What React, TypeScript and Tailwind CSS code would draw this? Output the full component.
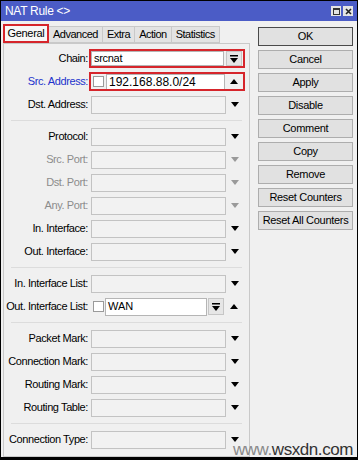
import React from "react";

// small dropdown triangles
const Down = ({ gray = false }: { gray?: boolean }) => (
  <svg width="8" height="5" viewBox="0 0 8 5">
    <path d="M0 0h8L4 5z" fill={gray ? "#9a9a9a" : "#000"} />
  </svg>
);

const Up = () => (
  <svg width="8" height="5" viewBox="0 0 8 5">
    <path d="M0 5h8L4 0z" fill="#000" />
  </svg>
);

const DownBar = () => (
  <svg width="8" height="8" viewBox="0 0 8 8">
    <rect x="0" y="0" width="8" height="1.5" fill="#000" />
    <path d="M0 3h8L4 8z" fill="#000" />
  </svg>
);

type RowProps = {
  label: string;
  tone?: "normal" | "blue" | "gray";
  children: React.ReactNode;
};

const Row = ({ label, tone = "normal", children }: RowProps) => {
  const color =
    tone === "blue" ? "text-[#2233cc]" : tone === "gray" ? "text-[#8c8c8c]" : "text-black";
  return (
    <div className="flex h-[23px] items-center">
      <div
        className={`flex w-[84px] justify-end whitespace-nowrap text-[11px] tracking-[-0.4px] ${color}`}
      >
        {label}
      </div>
      <div className="relative ml-[3px] flex h-full w-[152px] items-center">{children}</div>
    </div>
  );
};

const EmptyField = ({ gray = false }: { gray?: boolean }) => (
  <>
    <div className="h-[18px] w-[135px] border border-[#c3c3c3] bg-[#f2f2f2]" />
    <div className="flex w-[17px] justify-center">
      <Down gray={gray} />
    </div>
  </>
);

const Sep = () => (
  <div className="flex h-[9px] items-center px-[7px]">
    <div className="h-px w-full bg-[#dcdcdc]" />
  </div>
);

const RedBox = () => (
  <div className="pointer-events-none absolute -left-[2px] top-[2px] h-[19px] w-[156px] border-2 border-[#d6252b]" />
);

const tabs = ["General", "Advanced", "Extra", "Action", "Statistics"];
const buttons = [
  "OK",
  "Cancel",
  "Apply",
  "Disable",
  "Comment",
  "Copy",
  "Remove",
  "Reset Counters",
  "Reset All Counters",
];

export default function App() {
  return (
    <div
      className="relative flex h-[460px] w-[358px] flex-col border border-b-[3px] border-black bg-[#f0f0f0]"
      style={{ fontFamily: '"Liberation Sans", Arial, sans-serif' }}
    >
      {/* title bar */}
      <div className="flex h-[20px] items-center justify-between bg-[#4b5cc6] pl-[4px] pr-[4px]">
        <span className="text-[12px] tracking-[-0.3px] text-white">NAT Rule &lt;&gt;</span>
        <div className="flex gap-[2px]">
          <div className="flex h-[10px] w-[10px] items-center justify-center bg-[#e4e4e4]">
            <div className="h-[7px] w-[7px] border border-t-2 border-[#333]" />
          </div>
          <div className="flex h-[10px] w-[10px] items-center justify-center bg-[#e4e4e4]">
            <svg width="7" height="7" viewBox="0 0 7 7">
              <path d="M1 1l5 5M6 1L1 6" stroke="#222" strokeWidth="1.6" />
            </svg>
          </div>
        </div>
      </div>

      <div className="flex flex-1">
        {/* left side: tabs + panel */}
        <div className="flex w-[249px] flex-col pl-[2px] pt-[3px]">
          <div className="flex h-[19px] items-end">
            {tabs.map((t, i) => (
              <div
                key={t}
                className={
                  i === 0
                    ? "flex h-[19px] w-[46px] items-center justify-center border-2 border-[#d6252b] bg-[#f7f7f7] text-[11px] tracking-[-0.3px]"
                    : "flex h-[17px] items-center border border-l-0 border-[#c9c9c9] bg-[#e3e3e3] px-[4px] text-[11px] tracking-[-0.5px]"
                }
              >
                {t}
              </div>
            ))}
          </div>
          <div className="flex flex-1 flex-col border border-t border-[#c9c9c9] pt-[3px]">
            <Row label="Chain:">
              <div className="flex h-[15px] w-[133px] items-center border border-[#b5b5b5] bg-white px-[2px] text-[11px] tracking-[-0.3px]">
                srcnat
              </div>
              <div className="ml-[2px] flex h-[15px] w-[16px] items-center justify-center border border-[#c6c6c6] bg-[#e6e6e6]">
                <DownBar />
              </div>
              <RedBox />
            </Row>
            <Row label="Src. Address:" tone="blue">
              <div className="ml-[2px] h-[11px] w-[11px] border border-[#9a9a9a] bg-white" />
              <div className="ml-[2px] flex h-[16px] w-[119px] items-center border border-[#b5b5b5] bg-white px-[2px] text-[12px]">
                192.168.88.0/24
              </div>
              <div className="flex w-[18px] justify-center">
                <Up />
              </div>
              <RedBox />
            </Row>
            <Row label="Dst. Address:">
              <EmptyField />
            </Row>
            <Sep />
            <Row label="Protocol:">
              <EmptyField />
            </Row>
            <Row label="Src. Port:" tone="gray">
              <EmptyField gray />
            </Row>
            <Row label="Dst. Port:" tone="gray">
              <EmptyField gray />
            </Row>
            <Row label="Any. Port:" tone="gray">
              <EmptyField gray />
            </Row>
            <Row label="In. Interface:">
              <EmptyField />
            </Row>
            <Row label="Out. Interface:">
              <EmptyField />
            </Row>
            <Sep />
            <Row label="In. Interface List:">
              <EmptyField />
            </Row>
            <Row label="Out. Interface List:">
              <div className="ml-[2px] h-[11px] w-[11px] border border-[#9a9a9a] bg-white" />
              <div className="ml-[1px] flex h-[18px] w-[102px] items-center border border-[#b5b5b5] bg-white px-[2px] text-[11px]">
                WAN
              </div>
              <div className="ml-[1px] flex h-[17px] w-[16px] items-center justify-center border border-[#c6c6c6] bg-[#e6e6e6]">
                <DownBar />
              </div>
              <div className="flex w-[19px] justify-center">
                <Up />
              </div>
            </Row>
            <Sep />
            <Row label="Packet Mark:">
              <EmptyField />
            </Row>
            <Row label="Connection Mark:">
              <EmptyField />
            </Row>
            <Row label="Routing Mark:">
              <EmptyField />
            </Row>
            <Row label="Routing Table:">
              <EmptyField />
            </Row>
            <Sep />
            <Row label="Connection Type:">
              <EmptyField />
            </Row>
          </div>
        </div>

        {/* right side: buttons */}
        <div className="ml-[8px] flex w-[95px] flex-col gap-[4px] pt-[6px]">
          {buttons.map((b, i) => (
            <div
              key={b}
              className={`flex h-[19px] items-center justify-center whitespace-nowrap border bg-[#e1e1e1] text-[11px] tracking-[-0.3px] ${
                i === 0 ? "border-[#4a4a4a]" : "border-[#adadad]"
              }`}
            >
              {b}
            </div>
          ))}
        </div>
      </div>

      {/* watermark */}
      <div className="absolute -bottom-[3px] right-[4px] text-[17px] leading-[20px] tracking-tight text-[#8a8a8a]">
        www.<span className="text-[#333]">wsxdn.com</span>
      </div>
    </div>
  );
}
